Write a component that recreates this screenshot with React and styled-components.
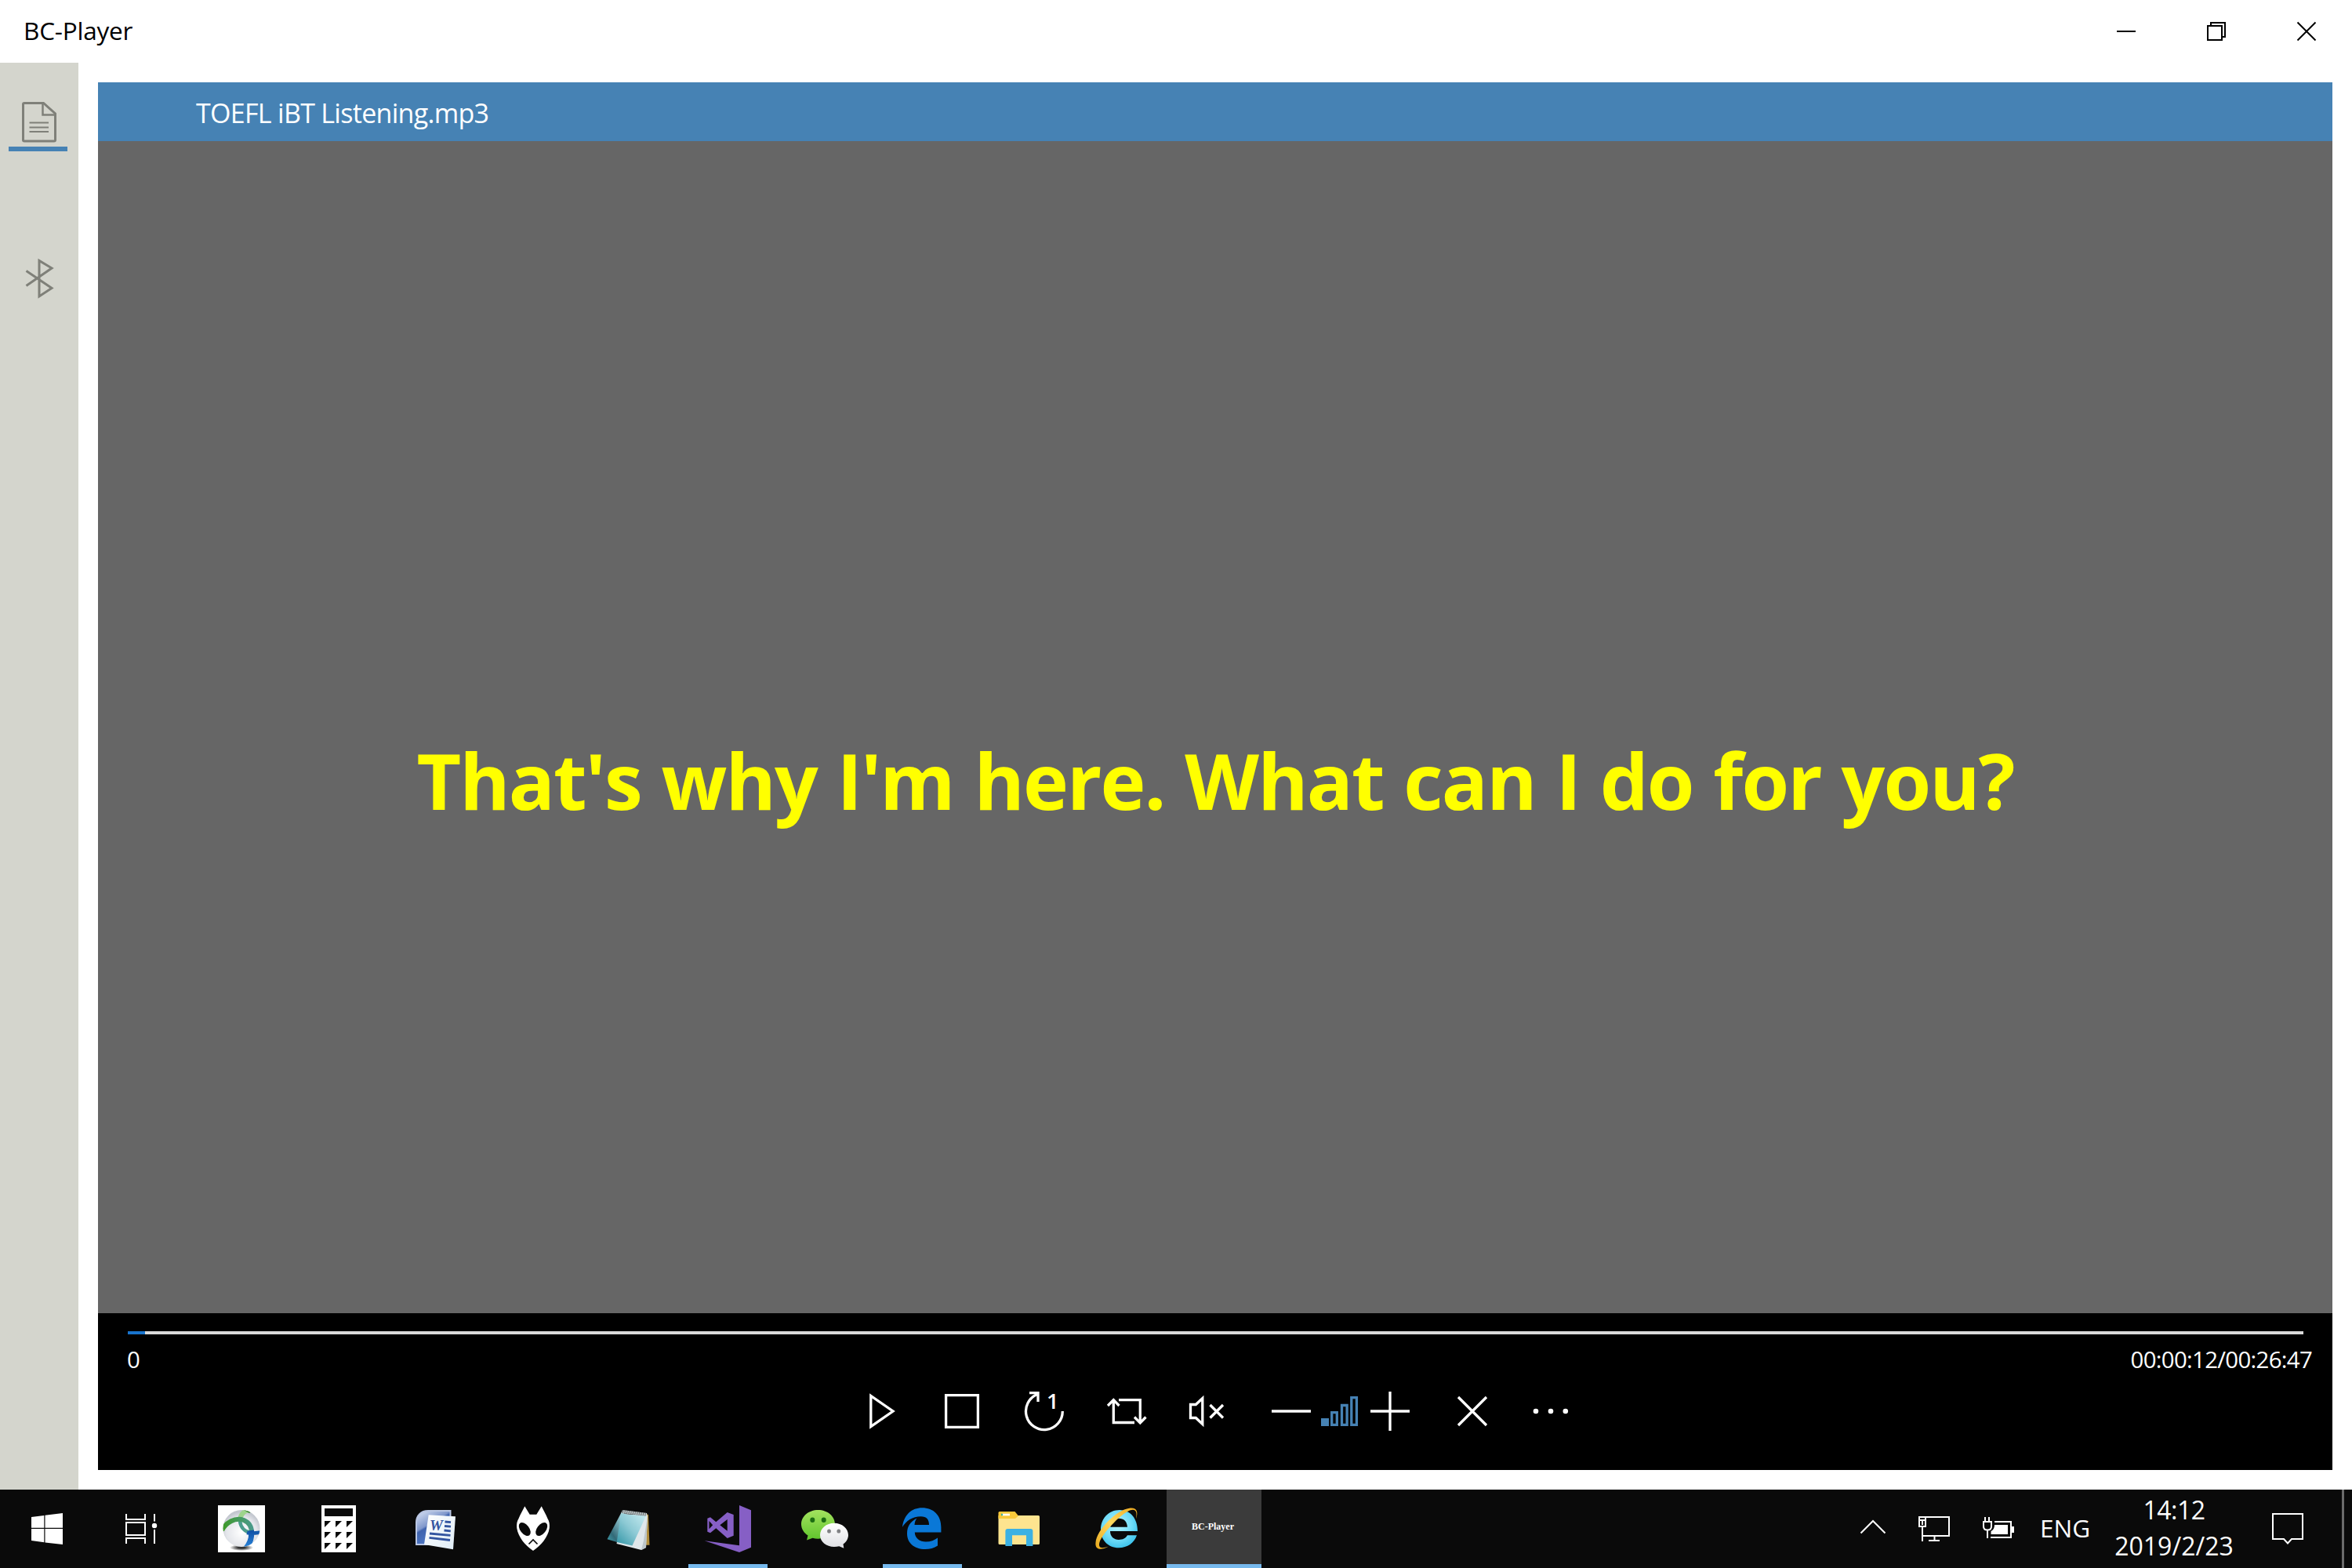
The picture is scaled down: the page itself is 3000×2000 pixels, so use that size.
import styled, { createGlobalStyle } from "styled-components";

const GlobalStyle = createGlobalStyle`
  * {
    box-sizing: border-box;
  }

  body {
    margin: 0;
    background: #fff;
    font-family: "Open Sans", "Noto Sans", sans-serif;
  }
`;

const DocumentIcon = () => (
  <svg width="50" height="54" viewBox="0 0 50 54" fill="none" stroke="#7f8079">
    <path d="M5.5 3.5h25L45.5 17v33.5a1.5 1.5 0 0 1-1.5 1.5H6a1.5 1.5 0 0 1-1.5-1.5V5a1.5 1.5 0 0 1 1.5-1.5z" strokeWidth="3" />
    <path d="M29.5 3.5v15h16" strokeWidth="2.5" />
    <path d="M12.5 28.5H37M12.5 34.5H37M12.5 40H37" strokeWidth="2" />
  </svg>
);

const BluetoothIcon = () => (
  <svg width="50" height="54" viewBox="0 0 50 54" fill="none" stroke="#7f8079" strokeWidth="3">
    <path d="M8.5 17.5L41 39.5 25 50V4.5L41 14 8.5 36.5" />
  </svg>
);

const controls = [
  {
    name: "play",
    space: 0,
    icon: <path d="M10.8 5.5v39L39 25z" />,
  },
  {
    name: "stop",
    space: 52,
    icon: <path d="M4.6 4.6h40.8v40.8H4.6z" />,
  },
  {
    name: "repeat one",
    space: 55,
    icon: (
      <>
        <path d="M48.3 25A23.4 23.4 0 1 1 16 3.5" />
        <path d="M6 1.7h11V13" />
        <text x="28" y="22" fontSize="27" fontWeight="600" fill="#fff" stroke="none">1</text>
      </>
    ),
  },
  {
    name: "repeat",
    space: 55,
    icon: (
      <>
        <path d="M1 18l7.300-7.300L15.500 18M8.300 11v28.500H35" />
        <path d="M15 10.600h27.300V39M35 32.500l7.300 7.300 7.200-7.300" />
      </>
    ),
  },
  {
    name: "mute",
    space: 51,
    icon: (
      <>
        <path d="M5.500 16.500h6.800l8.500-8v33l-8.500-8H5.500z" />
        <path d="M30.500 17l16.500 16.500M47 17L30.500 33.500" />
      </>
    ),
  },
  {
    name: "volume down",
    space: 59,
    icon: <path d="M0 25h50" />,
  },
  {
    name: "volume",
    space: 12,
    color: "#4682b4",
    icon: (
      <>
        <path d="M1 34h10v10H1z" fill="#4682b4" stroke="none" />
        <path d="M14.7 26.700h6.600v15.600h-6.600zM27.500 17.500h6.600v24.800h-6.600zM39.800 7.700h6.600v34.600h-6.600z" />
      </>
    ),
  },
  {
    name: "volume up",
    space: 14,
    icon: <path d="M0 25h50M25 0v50" />,
  },
  {
    name: "close",
    space: 55,
    icon: <path d="M7 7l36 36M43 7L7 43" />,
  },
  {
    name: "more",
    space: 50,
    icon: (
      <g fill="#fff" stroke="none">
        <circle cx="6" cy="25" r="3.300" />
        <circle cx="25" cy="25" r="3.300" />
        <circle cx="43.800" cy="25" r="3.300" />
      </g>
    ),
  },
];

const VpnIcon = () => (
  <svg width="60" height="60" viewBox="0 0 60 60">
    <defs>
      <radialGradient id="sphere" cx="0.5" cy="0.6" r="0.55">
        <stop offset="0" stopColor="#fff" />
        <stop offset="0.75" stopColor="#e3e5ea" />
        <stop offset="1" stopColor="#c3c7cf" />
      </radialGradient>
      <radialGradient id="shadow">
        <stop offset="0.3" stopColor="#333" />
        <stop offset="1" stopColor="#333" stopOpacity="0" />
      </radialGradient>
      <linearGradient id="greenBand" x1="0" x2="1">
        <stop offset="0" stopColor="#3f9a26" />
        <stop offset="1" stopColor="#4a9a88" />
      </linearGradient>
      <linearGradient id="blueBand" x1="0" y1="0" x2="0" y2="1">
        <stop offset="0" stopColor="#0f4fa5" />
        <stop offset="1" stopColor="#2b87dc" />
      </linearGradient>
      <clipPath id="sphereClip">
        <circle cx="30" cy="29.5" r="23.5" />
      </clipPath>
    </defs>
    <path fill="#fff" d="M0 0h60v60H0z" />
    <ellipse cx="30" cy="54" rx="15" ry="4" fill="url(#shadow)" />
    <circle cx="30" cy="29.5" r="23.5" fill="url(#sphere)" />
    <g clipPath="url(#sphereClip)" fill="none">
      <path d="M38 6c-7 3-10 8-10 14" stroke="#9ed48c" strokeWidth="6" />
      <path d="M33 6h14l-7 4z" fill="#2c8420" />
      <path d="M42 35C35 34 29 29 28 20" stroke="#4c9d8d" strokeWidth="4.5" />
      <path d="M5 32C10 22 22 15 33 19c7 3 10 8 10 16" stroke="url(#greenBand)" strokeWidth="6" />
      <path d="M37 35c6 1.500 11 .5 18-.5" stroke="#1459ad" strokeWidth="4.5" />
      <path d="M42.500 32c1 8-1 16-7 23" stroke="url(#blueBand)" strokeWidth="7" />
    </g>
  </svg>
);

const CalculatorIcon = () => (
  <svg width="60" height="60" viewBox="0 0 60 60">
    <path fill="#fff" d="M8 0h44v60H8z" />
    <path fill="#0a0a0a" d="M12 4h36v10H12z" />
    {[20, 34, 48].map((y) =>
      [12, 26, 40].map((x) => (
        <path key={`${x}-${y}`} fill="#0a0a0a" d={`M${x} ${y}h8l-8 8z`} />
      ))
    )}
  </svg>
);

const WordIcon = () => (
  <svg width="60" height="60" viewBox="0 0 60 60">
    <defs>
      <linearGradient id="wordBack" x1="0" y1="0" x2="0.6" y2="1">
        <stop offset="0" stopColor="#dde6f5" />
        <stop offset="0.45" stopColor="#7f97cc" />
        <stop offset="0.5" stopColor="#3f63ae" />
        <stop offset="1" stopColor="#5480cd" />
      </linearGradient>
      <linearGradient id="wordPage" x1="0" y1="0" x2="1" y2="1">
        <stop offset="0" stopColor="#fff" />
        <stop offset="1" stopColor="#dfecf6" />
      </linearGradient>
    </defs>
    <path d="M5 50V22C5 13 11 7 20 7h28.500v43z" fill="url(#wordBack)" stroke="#b9c6e3" strokeWidth="2" />
    <path d="M20.700 12.300L55 14.300 52 56.300 15 50z" fill="url(#wordPage)" />
    <text
      x="22"
      y="31.5"
      fontFamily="Liberation Serif, serif"
      fontSize="19"
      fontWeight="700"
      fontStyle="italic"
      fill="#3355a0"
    >
      W
    </text>
    <path
      d="M41.500 21l7.500.7M41 26.500l8 .7M40.500 32l8.300.8M22 36l26.500 2.300M21.500 41.300L48 44.500"
      stroke="#3355a0"
      strokeWidth="2.8"
    />
  </svg>
);

const FoobarIcon = () => (
  <svg width="60" height="60" viewBox="0 0 60 60">
    <path
      fill="#fff"
      d="M19.300 1.300l6.400 10.400h8.600l6.400-10.400C43 6 46.500 12 48.500 17c2 3 2.800 7 2.300 12C49 41 40 51 30 58 20 51 11 41 9.200 29c-.5-5 .3-9 2.300-12 2-5 5.500-11 7.800-15.700z"
    />
    <ellipse cx="19.300" cy="30.500" rx="9.800" ry="5.700" transform="rotate(52 19.300 30.500)" fill="#0a0a0a" />
    <ellipse cx="40.700" cy="30.500" rx="9.800" ry="5.700" transform="rotate(-52 40.700 30.500)" fill="#0a0a0a" />
    <path d="M24.500 49.500L30 44l5.500 5.500" fill="none" stroke="#0a0a0a" strokeWidth="1.700" />
  </svg>
);

const NotepadIcon = () => (
  <svg width="60" height="60" viewBox="0 0 60 60">
    <defs>
      <linearGradient id="noteTeal" x1="1" y1="0" x2="0" y2="1">
        <stop offset="0" stopColor="#c9edf2" />
        <stop offset="0.5" stopColor="#8cc9d4" />
        <stop offset="1" stopColor="#2f94a5" />
      </linearGradient>
      <linearGradient id="noteDark" x1="1" y1="0" x2="0" y2="1">
        <stop offset="0.2" stopColor="#a4d6de" />
        <stop offset="0.75" stopColor="#326a78" />
        <stop offset="1" stopColor="#3fa0ae" />
      </linearGradient>
    </defs>
    <path d="M50 11l3 1 1.500 38.700H50z" fill="#b18e3c" />
    <path d="M20 11l32 2-2 41-6 3-31.500-8z" fill="#dfe7ea" />
    <path d="M52 13l-2 41-6 3 3-12z" fill="#bcc6ca" />
    <path d="M18.700 9L28 13 13 47 .5 43.300z" fill="url(#noteDark)" />
    <path d="M18 11l32 2.500-17.500 38L12.700 47z" fill="url(#noteTeal)" />
    <path d="M20 6l31 4 .5 3.500L18.500 10z" fill="#d5dbdc" />
    <path d="M20 8l31 4" stroke="#5c6668" strokeWidth="4" strokeDasharray="1.200 1.400" />
  </svg>
);

const VisualStudioIcon = () => (
  <svg width="60" height="60" viewBox="0 0 60 60">
    <path
      fill="#865fc5"
      fillRule="evenodd"
      d="M45 0l15 6.300v47.400L45 60 .7 45.300 45 51.300zM4.300 16.700L8 15.300l7.300 6L29.700 9l8 3v26.700l-8 3.300-14.400-12.700-7.300 6-3.700-1.600zM6.500 20v10.300l4.700-5zM29.700 18v14.700l-9.400-7.400z"
    />
  </svg>
);

const WeChatIcon = () => (
  <svg width="60" height="60" viewBox="0 0 60 60">
    <defs>
      <linearGradient id="chatGreen" x1="0" y1="0" x2="0" y2="1">
        <stop offset="0" stopColor="#a3e25f" />
        <stop offset="1" stopColor="#5fc52c" />
      </linearGradient>
      <linearGradient id="chatWhite" x1="0" y1="0" x2="0" y2="1">
        <stop offset="0" stopColor="#fff" />
        <stop offset="1" stopColor="#dedfe3" />
      </linearGradient>
    </defs>
    <path fill="url(#chatGreen)" d="M21.500 6C33.500 6 43 14 43 24.300s-9.500 18.400-21.500 18.400c-2.500 0-4.800-.4-7-1L7 44.500l1.500-6C3.500 35.500 0 30 0 24.300 0 14 9.500 6 21.500 6z" />
    <ellipse cx="14.300" cy="18.700" rx="3" ry="3.200" fill="#1c6d12" />
    <ellipse cx="28.700" cy="18.700" rx="3" ry="3.200" fill="#1c6d12" />
    <path fill="url(#chatWhite)" d="M42 22.700c10 0 18 6.800 18 15.300 0 4.500-2.500 9-6.500 11.500l.8 5.200-6-2.500c-2 .6-4 .8-6.300.8-10 0-18-6.500-18-15s8-15.300 18-15.300z" />
    <ellipse cx="35.500" cy="33" rx="2.400" ry="2.600" fill="#808184" />
    <ellipse cx="47.800" cy="33" rx="2.400" ry="2.600" fill="#808184" />
  </svg>
);

const EdgeIcon = () => (
  <svg width="60" height="60" viewBox="0 0 60 60">
    <path
      fill="#0a78d7"
      d="M5 27.700C7 12 17 3.300 30 3.300c15 0 24.400 9.700 24.400 24.700v6.500H20.800c.2 7.500 6.200 12 14.200 12 6 0 11-2 15-5v10C45.500 54.500 40 56 34 56c-14 0-23-8-23-20 0-9 4-15 12.500-19.500-2 2.500-2.800 5.500-3 8.500H39c0-7-3-10.800-10.500-10.800C18 14.200 9.500 20 5 27.700z"
    />
  </svg>
);

const FolderIcon = () => (
  <svg width="60" height="60" viewBox="0 0 60 60">
    <path fill="#fde48f" d="M3.500 13h51a1.500 1.500 0 0 1 1.500 1.500v34a1.500 1.500 0 0 1-1.500 1.500H5a1.500 1.500 0 0 1-1.500-1.500z" />
    <path fill="#f9c93a" d="M5 8h19.500l4.500 5.500-4 3.500H3.500V9.500A1.500 1.500 0 0 1 5 8z" />
    <path fill="#fff" d="M8 10.700h10v2.600H8z" />
    <path fill="#3bb2a0" d="M7 10.700h2v2.600H7z" />
    <path fill="#3cb1e3" d="M12.400 52V33a3 3 0 0 1 3-3h29a3 3 0 0 1 3 3v19H39V38.300H21V52z" />
  </svg>
);

const ExplorerIcon = () => (
  <svg width="60" height="60" viewBox="0 0 60 60">
    <defs>
      <radialGradient id="ieBlue" cx="0.45" cy="0.4" r="0.65">
        <stop offset="0" stopColor="#b5f3ff" />
        <stop offset="0.6" stopColor="#6fdcf8" />
        <stop offset="1" stopColor="#35bfea" />
      </radialGradient>
      <linearGradient id="ieGold" x1="0" y1="1" x2="1" y2="0">
        <stop offset="0" stopColor="#e8a81c" />
        <stop offset="0.5" stopColor="#ffd95f" />
        <stop offset="1" stopColor="#eeaa1e" />
      </linearGradient>
    </defs>
    <path
      fill="url(#ieBlue)"
      fillRule="evenodd"
      d="M57 33H22c0 7 5 11 11 11 5 0 9-2 11-5.700h12C53 48 44 54.300 33 54.300 19 54.300 10 44 10 31 10 17 20 6 34 6s23 11 23 27zM22.300 27.700H44c-.5-7.200-4.500-11-11-11-6 0-10 3.800-10.700 11z"
    />
    <path
      fill="url(#ieGold)"
      d="M55 17.500c3-9 1.500-15-8.500-13.800C30 6 5 31 3.500 47.500 2.500 56 9 58.500 20 52.500 10 56 6.500 54 8.500 47 13 35 35 11.500 47 6.500c8.500-3 9.500 2.500 8 11z"
    />
  </svg>
);

const tasks = [
  { name: "vpn", icon: <VpnIcon /> },
  { name: "calculator", icon: <CalculatorIcon /> },
  { name: "word", icon: <WordIcon /> },
  { name: "foobar", icon: <FoobarIcon /> },
  { name: "notepad", icon: <NotepadIcon /> },
  { name: "visual studio", icon: <VisualStudioIcon />, running: true },
  { name: "wechat", icon: <WeChatIcon /> },
  { name: "edge", icon: <EdgeIcon />, running: true },
  { name: "folder", icon: <FolderIcon /> },
  { name: "internet explorer", icon: <ExplorerIcon /> },
];

const position = 12.74;
const duration = 1607;

const App = () => {
  return (
    <Desktop>
      <GlobalStyle />
      <TitleBar>
        <AppName>BC-Player</AppName>
        <WindowButtons>
          <svg width="24" height="24" viewBox="0 0 24 24">
            <path d="M0 12h24" stroke="#000" strokeWidth="2" />
          </svg>
          <svg width="24" height="24" viewBox="0 0 24 24" fill="none" stroke="#000" strokeWidth="2">
            <path d="M1 5h18v18H1zM5 5V1h18v18h-4" />
          </svg>
          <svg width="24" height="24" viewBox="0 0 24 24">
            <path d="M.5 .5l23 23M23.5 .5l-23 23" stroke="#000" strokeWidth="2" />
          </svg>
        </WindowButtons>
      </TitleBar>
      <Main>
        <Sidebar>
          <Tab active>
            <DocumentIcon />
          </Tab>
          <Tab>
            <BluetoothIcon />
          </Tab>
        </Sidebar>
        <Player>
          <FileBar>TOEFL iBT Listening.mp3</FileBar>
          <Screen>
            <Subtitle>That's why I'm here. What can I do for you?</Subtitle>
          </Screen>
          <ControlPanel>
            <Track>
              <Progress style={{ width: `${(position / duration) * 100}%` }} />
            </Track>
            <Times>
              <Time>0</Time>
              <Time>00:00:12/00:26:47</Time>
            </Times>
            <Controls>
              {controls.map(({ name, space, color, icon }) => (
                <ControlButton key={name} aria-label={name} space={space}>
                  <svg
                    width="50"
                    height="50"
                    viewBox="0 0 50 50"
                    fill="none"
                    stroke={color || "#fff"}
                    strokeWidth="3.3"
                  >
                    {icon}
                  </svg>
                </ControlButton>
              ))}
            </Controls>
          </ControlPanel>
        </Player>
      </Main>
      <Taskbar>
        <SystemButton>
          <svg width="40" height="40" viewBox="0 0 40 40" fill="#fff">
            <path d="M0 5l16.300-2v15.700H0zM17.500 2.800L40 0v18.700H17.500zM0 20h16.300v17.300L0 35zM17.500 20H40v20l-22.500-2.500z" />
          </svg>
        </SystemButton>
        <SystemButton>
          <svg width="40" height="38" viewBox="0 0 40 38" fill="none" stroke="#fff" strokeWidth="2">
            <path d="M1 0v7h24V0M1 11h24v16H1zM1 38v-7h24v7M37 0v9.500M37 20v18" />
            <circle cx="37" cy="15" r="3.200" fill="#fff" stroke="none" />
          </svg>
        </SystemButton>
        <Tasks>
          {tasks.map(({ name, icon, running }) => (
            <Task key={name} running={running}>
              {icon}
            </Task>
          ))}
          <Task current>BC-Player</Task>
        </Tasks>
        <Tray>
          <TrayIcons>
            <svg width="34" height="40" viewBox="0 0 34 40" fill="none" stroke="#fff" strokeWidth="2">
              <path d="M1.500 25.500L17 10l15.500 15.500" />
            </svg>
            <svg width="42" height="40" viewBox="0 0 42 40" fill="none" stroke="#fff" strokeWidth="2">
              <path d="M10 5h30v24H5M2 5h8v12H2zM6 17v19M21.500 29v6M14 35h14" />
              <path d="M3 9h6M6 9v6" />
            </svg>
            <svg width="42" height="40" viewBox="0 0 42 40" fill="none" stroke="#fff" strokeWidth="2">
              <path d="M16 11h21v20H11M7 22v10M4 5v5M9 5v5M2 11h10v6c0 3-2 4.500-5 4.500S2 20 2 17z" />
              <path d="M16 15h17v12H11.500v-4c3-1.500 4.500-4 4.500-8zM37 17h4v8h-4z" fill="#fff" stroke="none" />
            </svg>
          </TrayIcons>
          <Language>ENG</Language>
          <Clock>
            <ClockTime>14:12</ClockTime>
            <div>2019/2/23</div>
          </Clock>
          <svg width="42" height="40" viewBox="0 0 42 40" fill="none" stroke="#fff" strokeWidth="2">
            <path d="M2 1h38v32H26l-5 5.500-5-5.500H2z" />
          </svg>
        </Tray>
        <ShowDesktop />
      </Taskbar>
    </Desktop>
  );
};

const Desktop = styled.div`
  width: 3000px;
  height: 2000px;
  display: flex;
  flex-direction: column;
  overflow: hidden;

  svg {
    display: block;
    flex-shrink: 0;
    overflow: visible;
  }
`;

const TitleBar = styled.div`
  height: 80px;
  padding: 0 46px 0 30px;
  display: flex;
  justify-content: space-between;
  align-items: center;
`;

const AppName = styled.div`
  height: 80px;
  color: #000;
  font-size: 31.5px;
  line-height: 78px;
  letter-spacing: -0.2px;
`;

const WindowButtons = styled.div`
  display: flex;
  gap: 91px;
`;

const Main = styled.div`
  height: 1820px;
  display: flex;
`;

const Sidebar = styled.div`
  width: 100px;
  background: #d4d5cd;
`;

const Tab = styled.div.withConfig({
  shouldForwardProp: (prop) => prop !== "active",
})`
  width: 75px;
  height: 113px;
  margin: 0 0 87px 11px;
  padding: 48px 0 0 14px;
  border-bottom: 6px solid ${(props) => (props.active ? "#4682b4" : "transparent")};
`;

const Player = styled.div`
  width: 2850px;
  margin: 25px 0 25px 25px;
  display: flex;
  flex-direction: column;
`;

const FileBar = styled.div`
  height: 75px;
  padding-left: 125px;
  background: #4682b4;
  color: #fff;
  font-size: 34px;
  line-height: 78px;
  letter-spacing: -0.7px;
`;

const Screen = styled.div`
  height: 1495px;
  padding-top: 740px;
  background: #666;
  display: flex;
  justify-content: center;
`;

const Subtitle = styled.p`
  margin: 0;
  color: #ff0;
  font-size: 98px;
  font-weight: 700;
  line-height: 150px;
  letter-spacing: -1.9px;
  word-spacing: 2.2px;
  white-space: nowrap;
`;

const ControlPanel = styled.div`
  height: 200px;
  padding-top: 23px;
  background: #000;
`;

const Track = styled.div`
  height: 4px;
  margin: 0 37px 0 38px;
  background: #d9d9d9;
`;

const Progress = styled.div`
  height: 100%;
  background: #1874cd;
`;

const Times = styled.div`
  height: 73px;
  padding: 12px 26px 0 37px;
  display: flex;
  justify-content: space-between;
`;

const Time = styled.div`
  color: #fff;
  font-size: 29.4px;
  line-height: 40px;
  letter-spacing: -0.7px;
`;

const Controls = styled.div`
  display: flex;
  padding-left: 975px;
`;

const ControlButton = styled.button.withConfig({
  shouldForwardProp: (prop) => prop !== "space",
})`
  width: 50px;
  height: 50px;
  margin-left: ${(props) => props.space}px;
  padding: 0;
  border: none;
  background: none;
  font-family: inherit;
  cursor: pointer;
`;

const Taskbar = styled.div`
  height: 100px;
  background: #0a0a0a;
  color: #fff;
  display: flex;
`;

const SystemButton = styled.div`
  width: 120px;
  display: flex;
  justify-content: center;
  align-items: center;
`;

const Tasks = styled.div`
  display: flex;
  gap: 3px;
  margin-left: 8px;
`;

const Task = styled.div.withConfig({
  shouldForwardProp: (prop) => !["running", "current"].includes(prop),
})`
  width: 121px;
  padding: ${(props) => (props.current ? "0 3px 5px 0" : "0 0 0 30px")};
  justify-content: ${(props) => (props.current ? "center" : "flex-start")};
  display: flex;
  align-items: center;
  font-family: "Liberation Serif", serif;
  font-size: 12px;
  font-weight: 700;
  background-color: ${(props) => (props.current ? "#3b3b3b" : "transparent")};
  background-image: ${(props) =>
    props.running || props.current ? "linear-gradient(#76b9ed, #76b9ed)" : "none"};
  background-repeat: no-repeat;
  background-position: center bottom;
  background-size: ${(props) => (props.current ? "100%" : "101px")} 5px;
`;

const Tray = styled.div`
  margin-left: auto;
  display: flex;
  align-items: center;
`;

const TrayIcons = styled.div`
  display: flex;

  svg + svg {
    margin-left: 40px;
  }
`;

const Language = styled.div`
  width: 64px;
  margin: 0 31px 2px 32px;
  font-size: 31.5px;
  line-height: 98px;
`;

const Clock = styled.div`
  width: 152px;
  margin: 0 48px 2px 0;
  font-size: 32px;
  line-height: 46px;
  text-align: center;
`;

const ClockTime = styled.div`
  letter-spacing: -0.5px;
`;

const ShowDesktop = styled.div`
  width: 13px;
  margin-left: 48px;
  border-left: 3px solid #6b6b6b;
`;

export default App;
